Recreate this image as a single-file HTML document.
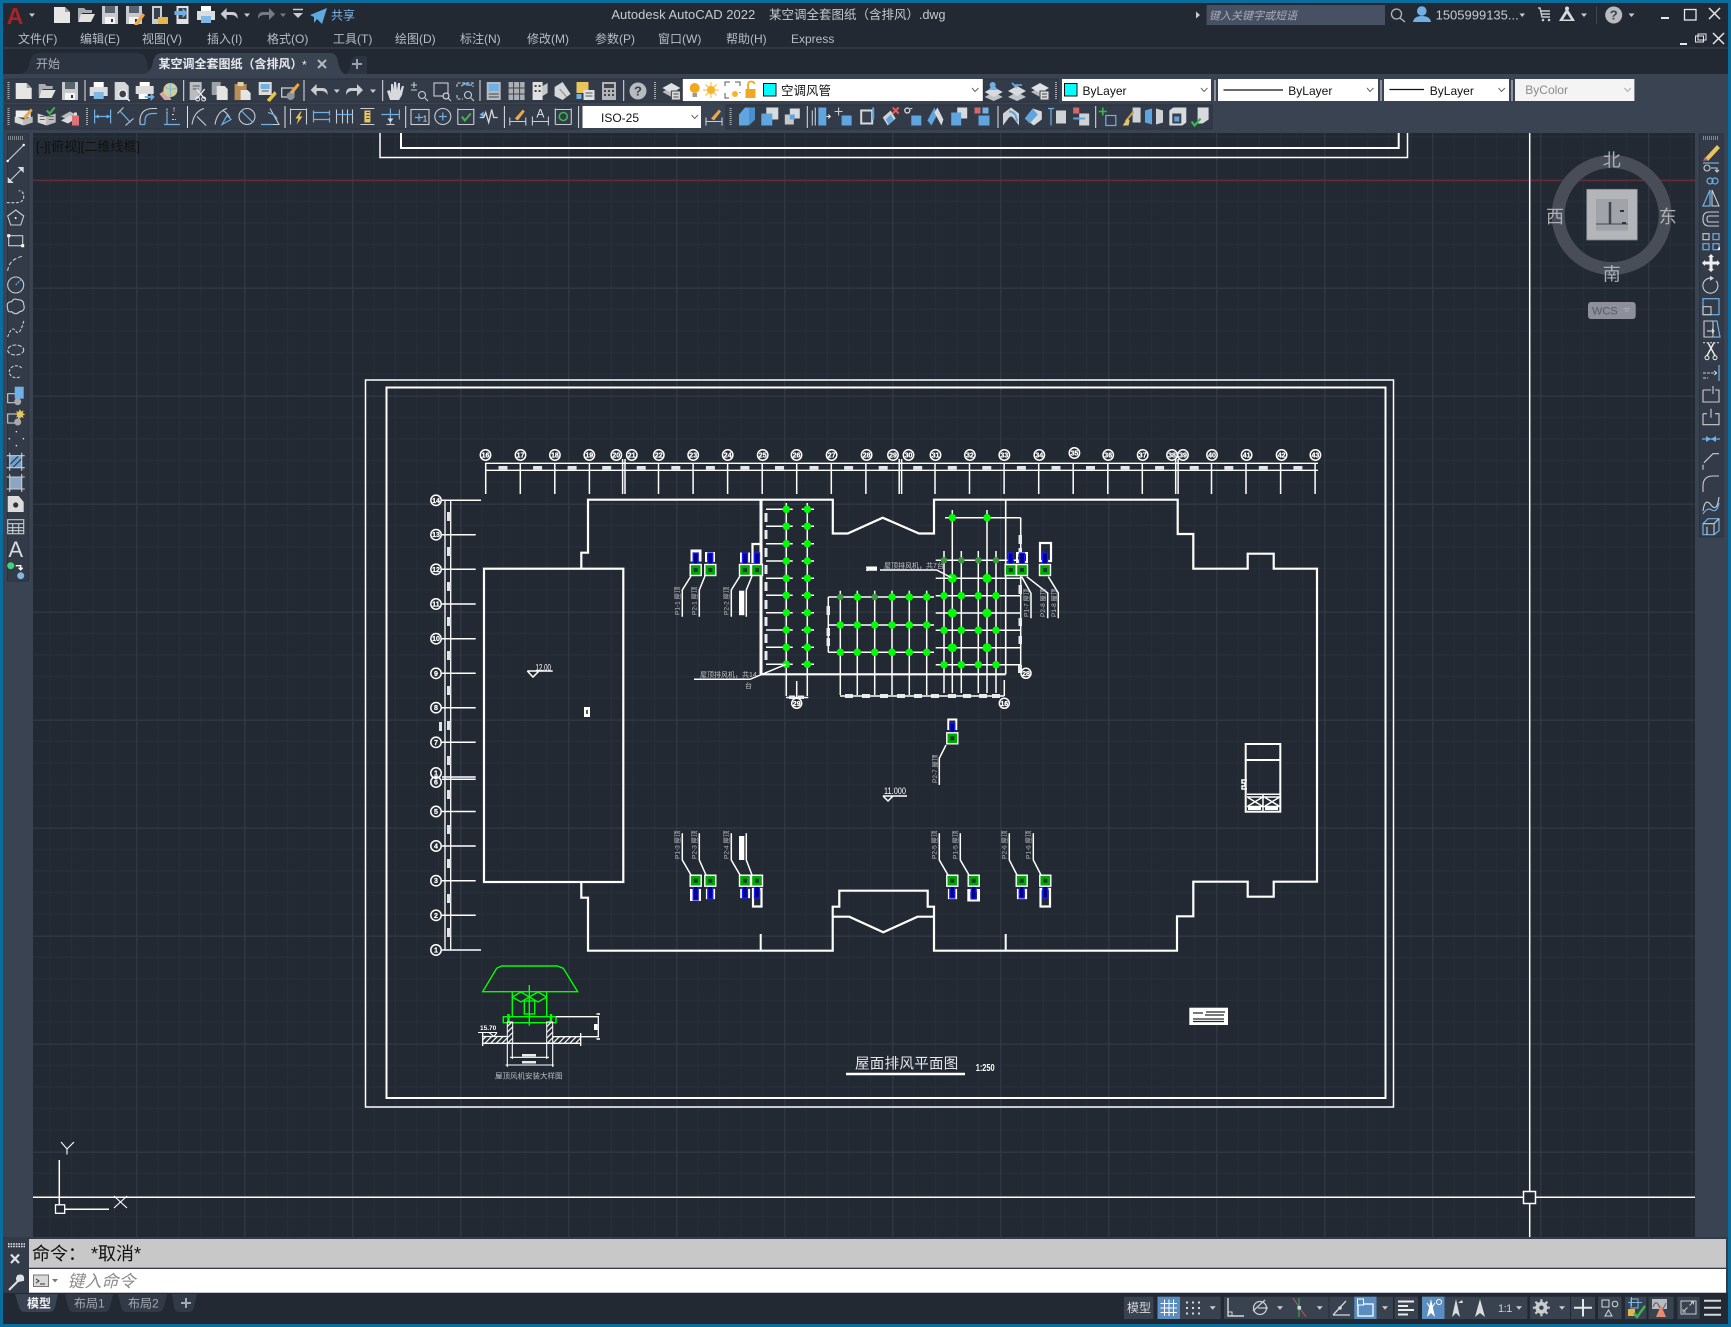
<!DOCTYPE html>
<html lang="zh"><head><meta charset="utf-8"><title>AutoCAD</title>
<style>
html,body{margin:0;padding:0;background:#222933;width:1731px;height:1327px;overflow:hidden}
svg{display:block;position:absolute;left:0;top:0}
text{font-family:"Liberation Sans","Noto Sans CJK SC",sans-serif}
.m{font-size:12px;fill:#b8bdc4}
.s{fill:none;stroke:#c8ced4;stroke-width:1.100}
.b{fill:none;stroke:#6fb1e6;stroke-width:1.200}
.w{fill:none;stroke:#fff;stroke-width:1.500}
.t{fill:none;stroke:#fff;stroke-width:2.200}
.n{font-size:7px;font-weight:bold;fill:#fff;text-anchor:middle;stroke:#fff;stroke-width:.25}
.c{fill:none;stroke:#fff;stroke-width:1.500}
.v{font-size:6.500px;fill:#b9bdc2}
.g{fill:none;stroke:#0f0;stroke-width:1.400}
.k{font-size:12px;fill:#111}
</style></head><body>
<svg width="1731" height="1327" viewBox="0 0 1731 1327" xmlns="http://www.w3.org/2000/svg">
<defs>
<pattern id="grid" x="28.3" y="71.6" width="108" height="108" patternUnits="userSpaceOnUse">
<rect width="108" height="108" fill="#222933"/>
<path d="M21.6 0V108M43.2 0V108M64.8 0V108M86.4 0V108M0 21.6H108M0 43.2H108M0 64.8H108M0 86.4H108" stroke="#282f3a" stroke-width="1" fill="none"/>
<path d="M.5 0V108M0 .5H108" stroke="#363d48" stroke-width="1" fill="none"/>
</pattern>
<pattern id="hat" width="4" height="4" patternUnits="userSpaceOnUse" patternTransform="rotate(45)"><rect width="1.2" height="4" fill="#fff"/></pattern>
<g id="new"><path d="M-8-8H3L8-3V8H-8Z" fill="#e6e6e4"/><path d="M3-8V-3H8Z" fill="#9aa0a6"/></g>
<g id="open"><path d="M-8-7h6l2 2h6v3H-4L-8 6Z" fill="#a9adb2"/><path d="M-5-1H9L5 7H-8Z" fill="#e2e2de"/></g>
<g id="save"><path d="M-8-9H8V9H-8Z" fill="#c6cacd"/><rect x="-5" y="-9" width="10" height="7" fill="#59626f"/><rect x="-5" y="2" width="10" height="7" fill="#f4f4f4"/><rect x="1" y="4" width="2" height="3" fill="#333"/></g>
<g id="saveas"><use href="#save"/><path d="M1 8L8-2L11 0L4 10L0 10Z" fill="#e9a94a"/></g>
<g id="print"><rect x="-5" y="-9" width="10" height="5" fill="#fff"/><rect x="-9" y="-4" width="18" height="9" fill="#dcdcdc"/><rect x="-5" y="1" width="10" height="7" fill="#7fb8e6"/></g>
<g id="undo"><path d="M-9-1L-3-7V-3H3Q8-3 8 3V4Q6 0 2 0H-3V5Z" fill="#c9ccd0"/></g>
<g id="redo"><path d="M9-1L3-7V-3H-3Q-8-3-8 3V4Q-6 0-2 0H3V5Z" fill="#c9ccd0"/></g>
<g id="dr"><path d="M-3-1.5H3L0 2Z" fill="#c9ccd0"/></g>
<g id="prev"><path d="M-7-9H3L7-5V9H-7Z" fill="#d5d6d6"/><circle cx="1" cy="3" r="4" fill="#39414e" stroke="#eee" stroke-width="1.3"/><path d="M4 6L8 10" stroke="#eee" stroke-width="1.5"/></g>
<g id="plot"><rect x="-5" y="-9" width="10" height="4" fill="#fff"/><rect x="-9" y="-5" width="18" height="8" fill="#dcdcdc"/><rect x="-6" y="3" width="9" height="5" fill="#fff"/><path d="M0 5H6V2L10 6L6 10V7H0Z" fill="#6fb1e6"/></g>
<g id="globe"><path d="M-9 3L-2-2L3 9L-4 9Z" fill="#d7a9a0"/><circle cx="2" cy="-1" r="7" fill="#cfcf9e"/><path d="M-3-4Q2 0 8-3M2-8V6" stroke="#7fb8e6" fill="none"/></g>
<g id="cut"><path d="M-7-9H5V-1L-1 9H-7Z" fill="#b9bdc1"/><path d="M-4-5H3M-4-2H2" stroke="#555"/><path d="M0-2L8 8M8-2L0 8" stroke="#eee" stroke-width="1.4"/><circle cx="1" cy="8" r="2" fill="none" stroke="#eee"/><circle cx="7" cy="8" r="2" fill="none" stroke="#eee"/></g>
<g id="copy"><path d="M-8-9H1V4H-8Z" fill="#9da2a7"/><path d="M-3-5H5L8-2V9H-3Z" fill="#e4e4e2"/></g>
<g id="paste"><path d="M-8-7H4V9H-8Z" fill="#b98d54"/><rect x="-5" y="-9" width="6" height="4" fill="#e0d3b0"/><path d="M-2-1H5L8 2V9H-2Z" fill="#e4e4e2"/></g>
<g id="match"><rect x="-8" y="-9" width="13" height="13" fill="#ddd"/><rect x="-6" y="-7" width="9" height="5" fill="#6fb1e6"/><path d="M-5 0H2" stroke="#555"/><path d="M0 9L8 0L10 3L3 11Z" fill="#e9c34a"/></g>
<g id="pub"><rect x="-8" y="-3" width="12" height="9" fill="none" stroke="#c9ccd0" stroke-width="1.3"/><circle cx="1" cy="5" r="4" fill="#8b949c"/><path d="M0 1L8-8L10-6L3 3Z" fill="#e9a94a"/></g>
<g id="hand"><path d="M-6 9L-9 0L-6-1L-5 2L-5-7L-3-7L-2-1L-2-9L0-9L1-1L2-8L4-8L4 0L6-5L8-5L6 4L3 9Z" fill="#d7dadc"/></g>
<g id="zrt"><path d="M-8-6H-2M-5-9V-3M-8-1H-2" class="s"/><circle cx="3" cy="4" r="3.5" class="s"/><path d="M6 7L9 10" class="s"/></g>
<g id="zw"><rect x="-8" y="-8" width="14" height="13" class="s"/><circle cx="4" cy="5" r="3" fill="#39414e" stroke="#eee"/><path d="M6 7L9 10" class="s"/></g>
<g id="zp"><path d="M-8-4V-8H8V-4M-8 4V8H-2" stroke="#d3d9de" fill="none" stroke-dasharray="3 1.5"/><path d="M-4-5L2-8V-6H7" stroke="#6fb1e6" fill="none" stroke-width="1.5"/><circle cx="3" cy="4" r="3.5" class="s"/><path d="M6 7L9 10" class="s"/></g>
<g id="pr"><rect x="-7" y="-9" width="14" height="18" fill="#b6bbc0"/><rect x="-5" y="-7" width="10" height="7" fill="#6fb1e6"/><path d="M-5 3H5M-5 6H5" stroke="#444"/></g>
<g id="dc"><rect x="-8" y="-9" width="16" height="18" fill="#aab0b5"/><path d="M-3-9V9M3-9V9M-8-3H8M-8 3H8" stroke="#444"/></g>
<g id="pal"><rect x="-7" y="-9" width="10" height="18" fill="#e0e0e0"/><path d="M-5-6h2v2h-2zM-1-6h2v2h-2zM-5-1h2v2h-2zM-1-1h2v2h-2z" fill="#444"/><path d="M3-5L8-8V2L3 5Z" fill="#c5c8cb"/></g>
<g id="sheet"><path d="M-8-4L0-9L8 3L0 9L-8 5Z" fill="#d5d8da"/><path d="M-3-2L4 6" stroke="#888"/></g>
<g id="note"><rect x="-9" y="-9" width="12" height="11" fill="#eac65a"/><rect x="-2" y="-1" width="11" height="10" fill="#dfe2e4"/><path d="M0 2H7M0 5H7" stroke="#555"/><rect x="-9" y="3" width="5" height="5" fill="#6fb1e6"/></g>
<g id="calc"><rect x="-7" y="-9" width="14" height="18" fill="#b2b6ba"/><rect x="-5" y="-7" width="10" height="4" fill="#444"/><path d="M-5-1h2v2h-2zM-1-1h2v2h-2zM3-1h2v2h-2zM-5 3h2v2h-2zM-1 3h2v2h-2zM3 3h2v2h-2z" fill="#444"/></g>
<g id="help"><circle r="8.5" fill="#b7bbc0"/><text x="0" y="4.5" text-anchor="middle" style="font-size:13px;font-weight:bold;fill:#39414e">?</text></g>
<g id="lay"><path d="M-9 1L0-4L9 1L0 6Z" fill="#b6bbc0"/><path d="M-9-3L0-8L9-3L0 2Z" fill="#dfe2e4"/><rect x="0" y="0" width="9" height="9" fill="#d9dcde" stroke="#444"/><path d="M2 3h5M2 6h5" stroke="#444"/></g>
<g id="lay2"><path d="M-9 6L0 1L9 6L0 10Z" fill="#c0c4c8"/><path d="M-9 1L0-4L9 1L0 6Z" fill="#d8dbdd"/><circle cx="-1" cy="-6" r="3" fill="#6fb1e6"/><path d="M-5-1H4L2-4H-3Z" fill="#6fb1e6"/></g>
<g id="lay3"><path d="M-9 6L0 1L9 6L0 10Z" fill="#c0c4c8"/><path d="M-9 0L0-5L9 0L0 5Z" fill="#d8dbdd"/><path d="M-5-8L-1-4V-6H5" fill="none" stroke="#6fb1e6" stroke-width="1.6"/></g>
<g id="book"><path d="M-9 0L0 3V9L-9 6Z" fill="#d8d8d8"/><path d="M9 0L0 3V9L9 6Z" fill="#bcbcbc"/><rect x="-8" y="-6" width="15" height="7" fill="#eee"/><path d="M-1 1L7-8L9-6L2 3Z" fill="#e9a94a"/></g>
<g id="book2"><path d="M-9-3L0 0V9L-9 6Z" fill="#d8d8d8"/><path d="M9-3L0 0V9L9 6Z" fill="#bcbcbc"/><path d="M-7 0h5M-7 3h5M2 0h5M2 3h5" stroke="#666"/><path d="M0-6L3-3L8-9" stroke="#3eb54e" fill="none" stroke-width="2"/></g>
<g id="tex"><path d="M-9 0L0-5L6-2L-2 3Z" fill="#b6bbc0"/><path d="M-9 4L0-1L6 2L-2 7Z" fill="#d5d8da"/><rect x="2" y="-1" width="7" height="10" fill="#e07078"/><rect x="4" y="-4" width="3" height="3" fill="#ddd"/></g>
<g id="d1"><path class="b" d="M-8-7V7M8-7V7M-8 0H8"/><path d="M-8 0l4-2v4zM8 0l-4-2v4z" fill="#6fb1e6"/></g>
<g id="d2"><path class="s" d="M-8-3L-2-9M0 9L8 2"/><path class="b" d="M-6-6L5 6"/></g>
<g id="d3"><path class="s" d="M-9 8V3Q-8-8 4-8H8"/><path class="b" d="M-4 8V4Q-4-3 4-3H8M-9 8H-4"/></g>
<g id="d4"><path class="b" d="M-8 8H8M-5 8V-3"/><path class="s" d="M-5-3V-8M0 3H4M0-2H3M2-9V-5" stroke-dasharray="2 1"/></g>
<g id="a1"><path class="s" d="M-9 8Q-7-5 3-8M-4 0L5 9"/></g>
<g id="a2"><path class="s" d="M-9 8Q-7-5 3-8M-1-6Q4-3 6 2"/><path class="b" d="M-2 8L3-1L7 3Z"/></g>
<g id="a3"><circle r="8" class="s"/><path class="b" d="M-6-6L6 6"/></g>
<g id="a4"><path class="s" d="M-9 8H9L0-8"/><path class="b" d="M-2-4Q6-2 7 3M-9 8L3 8"/></g>
<g id="f1"><path class="s" d="M-8-8V8M8-8V8M-8-7H8"/><path d="M2-5L-3 2H0L-2 8L4 0H1L3-5Z" fill="#eac65a"/></g>
<g id="f2"><path class="b" d="M-8-6V6M-8-4H8M-8 3H8M8-6V-1M8 1V6"/></g>
<g id="f3"><path class="s" d="M-8-7V7M-2-7V7M3-7V7M8-7V7"/><path class="b" d="M-8-2H8"/></g>
<g id="f4"><path class="s" d="M-7-8H7M-7 8H7"/><rect x="-3" y="-6" width="6" height="12" fill="#eac65a"/><path d="M-1-4H2M-1-1H2M-1 2H2" stroke="#444"/></g>
<g id="f5"><path class="b" d="M-9-2H9M9-7V3M0-8V8"/><path class="s" d="M-4 8H4"/><path d="M0 6l-3-4h6z" fill="#d3d9de"/></g>
<g id="g1"><rect x="-9" y="-7" width="18" height="15" class="s"/><path d="M-1-3V5M-5 1H3" class="b"/><text x="5" y="5" style="font-size:8px;fill:#eee;text-anchor:middle">1</text></g>
<g id="g2"><circle r="8" class="s"/><path class="b" d="M-4 0H4M0-4V4"/></g>
<g id="g3"><path class="s" d="M-8-8V8M8-8V8M-8-7H8"/><path d="M-4 0L-1 4L5-3" stroke="#3eb54e" stroke-width="2" fill="none"/><path class="s" d="M-8 8H8"/></g>
<g id="g4"><path d="M-9 1L-5 1L-3-4L0 6L3-7L5 1H9" fill="none" stroke="#d3d9de" stroke-width="1.3"/><path d="M-9-2L-5-5V1Z" fill="#6fb1e6"/></g>
<g id="g5"><path class="s" d="M-8 1V9M8 1V9M-8 5H8"/><path d="M-3 2L5-7L7-5L0 4Z" fill="#e9a94a"/></g>
<g id="g6"><path class="s" d="M-8 0V9M8 0V9M-8 5H8"/><text y="1" text-anchor="middle" style="font-size:12px;fill:#dfe3e6">A</text></g>
<g id="g7"><path class="s" d="M-8-8V8M8-8V8M-8-7H8M-8 8H8"/><circle r="4" fill="none" stroke="#3eb54e" stroke-width="1.6"/></g>
<g id="c1"><path d="M-8 9V-2L-2-9H8V3L1 9Z" fill="#5fa5e0"/><path d="M2-9H8V3L2 9Z" fill="#4a90cc"/></g>
<g id="c2"><path d="M-3-9H9V3H-3Z" fill="#d8dbdd"/><path d="M-8-3H3V9H-8Z" fill="#5fa5e0"/></g>
<g id="c3"><path d="M-2-8H8V2H-2Z" fill="#d8dbdd"/><path d="M-7-2H2V8H-7Z" fill="#c5c9cc"/><rect x="-2" y="-2" width="5" height="5" fill="#5fa5e0"/></g>
<g id="c4"><path d="M-2-9H6V9H-2Z" fill="#5fa5e0"/><path class="s" d="M-8-6V9M-5-9V9"/><path d="M6 0H10M8-2L10 0L8 2" stroke="#eee" fill="none"/></g>
<g id="c5"><path class="s" d="M-5-9V-1M-9-5H-1"/><rect x="-2" y="-1" width="10" height="10" fill="#5fa5e0"/></g>
<g id="c6"><rect x="-7" y="-7" width="13" height="15" fill="#d8dbdd"/><rect x="-5" y="-5" width="9" height="11" fill="#39414e"/><path d="M6-9V3" stroke="#5fa5e0" stroke-width="2"/></g>
<g id="c7"><path d="M-7 1L1-6L6 2L-2 9Z" fill="#d0d3d6"/><path d="M-4 3L1-2L4 3L-1 8Z" fill="#5fa5e0"/><path d="M3-9L9-3M9-9L3-3" stroke="#e25c5c" stroke-width="2"/></g>
<g id="c8"><circle cx="-6" cy="-6" r="2.5" fill="none" stroke="#ddd" stroke-width="1.3"/><path d="M-3-8h2" stroke="#ddd"/><rect x="-2" y="-1" width="10" height="10" fill="#5fa5e0"/></g>
<g id="c9"><path d="M-8 4L-1-9L2-2L-4 9Z" fill="#5fa5e0"/><path d="M2-9L8 3L6 9L-1-4Z" fill="#d8dbdd"/></g>
<g id="c10"><path d="M-1-9H9V2H-1Z" fill="#d8dbdd"/><path d="M-7-4H3V9H-7Z" fill="#5fa5e0"/></g>
<g id="c11"><rect x="-7" y="-9" width="6" height="6" fill="#d06a6a"/><rect x="1" y="-9" width="6" height="6" fill="#6fb1e6"/><rect x="-3" y="-1" width="11" height="10" fill="#5fa5e0"/></g>
<g id="c12"><path d="M-8 9V-3L0-9L8-3V9L2 1Q0-1-2 1Z" fill="#d0d3d6"/><path d="M-2-5Q5-5 6 5" stroke="#5fa5e0" stroke-width="2" fill="none"/></g>
<g id="c13"><path d="M-9 2L-1-8L8-5V3L0 9Z" fill="#d8dbdd"/><path d="M-9 2L-1-8L4-2L-4 7Z" fill="#5fa5e0"/></g>
<g id="c14"><path d="M-1-6H9V7H-1Z" fill="#d0d3d6"/><path class="b" d="M-6-8V9M-9-8H-3"/></g>
<g id="c15"><rect x="-7" y="-9" width="6" height="6" fill="#d06a6a"/><path d="M-1-3H9V9H-1Z" fill="#d0d3d6"/><path d="M-7 2H5" stroke="#5fa5e0" stroke-width="2"/></g>
<g id="c16"><path d="M-6-9V-1M-10-5H-2" stroke="#3eb54e" stroke-width="1.6"/><rect x="-3" y="-1" width="10" height="10" class="b" stroke-width="2"/></g>
<g id="c17"><path d="M1-9H9V6H1Z" fill="#cfd3d6"/><path d="M2-5L-6 5" stroke="#c6a45a" stroke-width="2"/><path d="M-9 9L-4 2L-2 4L-3 9Z" fill="#e5c76a"/></g>
<g id="c18"><path d="M-9-6L-2-8V8L-9 6Z" fill="#5fa5e0"/><path d="M2-8L9-6V6L2 8Z" fill="#d0d3d6"/></g>
<g id="c19"><path d="M-8-6L-4-9H9V6L5 9H-8Z" fill="#d8dbdd"/><rect x="-5" y="-3" width="9" height="10" fill="#39414e"/><rect x="-3" y="0" width="5" height="5" fill="#5fa5e0"/></g>
<g id="c20"><path d="M-3-9H8V3L2 7H-3Z" fill="#d8dbdd"/><path d="M-9 5L-6 9L0 2" stroke="#3eb54e" stroke-width="2.2" fill="none"/></g>
<g id="t1"><path class="s" d="M-8 8L8-8"/><circle cx="-8" cy="8" r="1.2" fill="#fff"/><circle cx="8" cy="-8" r="1.2" fill="#fff"/></g>
<g id="t2"><path class="s" d="M-5 5L5-5"/><path d="M-8 8V2L-2 8ZM8-8V-2L2-8Z" fill="#d5dade"/></g>
<g id="t3"><path class="s" d="M-9 6H0Q8 6 8 0Q8-6 3-6" stroke-dasharray="3 1.6"/></g>
<g id="t4"><path class="s" d="M0-8L8-2L5 7H-5L-8-2Z"/><circle cy="0" r="1" fill="#fff"/></g>
<g id="t5"><rect x="-7" y="-5" width="14" height="10" class="s"/><path d="M-8.500-6.500h3v3h-3zM5.500 3.500h3v3h-3z" fill="#fff"/></g>
<g id="t6"><path class="s" d="M-8 8Q-7-4 8-7" stroke-dasharray="4 2"/></g>
<g id="t7"><circle r="8" class="s"/><path class="b" d="M0 0L6-6" stroke-dasharray="2 1"/></g>
<g id="t8"><path class="s" d="M-8 2Q-10-5-4-5Q-2-9 2-7Q8-7 8-2Q10 4 4 5Q0 9-4 5Q-8 6-8 2Z"/></g>
<g id="t9"><path class="s" d="M-8 8Q-4-4 0 2T8-8" stroke-dasharray="3 1.5"/></g>
<g id="t10"><ellipse rx="8" ry="5" class="s" stroke-dasharray="4 1.5"/></g>
<g id="t11"><path class="s" d="M4 5A7 6 0 1 1 6-4" stroke-dasharray="3 1.5"/></g>
<g id="t12"><rect x="-8" y="-2" width="11" height="9" class="s"/><path d="M-1-9H8V3H-1Z" fill="#6fb1e6"/><circle cx="2" cy="6" r="3.5" fill="#aaa"/></g>
<g id="t13"><rect x="-8" y="-3" width="11" height="9" class="s"/><circle cx="2" cy="5" r="3.5" fill="#aaa"/><path d="M4-8l1.5 2.500 2.500-1-1 2.500 2.500 1.500-2.500 1 1 2.500-2.500-1L4 2l-1-2.500-2.500 1 1-2.500L-1-3l2.500-.5-1-2.500 2.500 1Z" fill="#eac65a"/></g>
<g id="t14"><path d="M0-7h1.400v1.400H0zM-7 0h1.400v1.400h-1.400zM7 0h1.400v1.400H7zM0 7h1.400v1.400H0z" fill="#e4e6e8"/></g>
<g id="t15"><rect x="-6" y="-6" width="12" height="12" fill="#6fa0cc"/><path d="M-3 6L6-3M-6 3L3-6" stroke="#223" stroke-width="1"/><path class="s" d="M-9-6H9M-9 6H9M-6-9V9M6-9V9"/></g>
<g id="t16"><rect x="-6" y="-6" width="12" height="12" fill="#8aa6c0"/><path class="s" d="M-9-6H9M-9 6H9M-6-9V9M6-9V9"/></g>
<g id="t17"><path d="M-8-8H3L8-2V8H-8Z" fill="#dcdcdc"/><circle cy="1" r="2.600" fill="#333"/></g>
<g id="t18"><rect x="-8" y="-7" width="16" height="14" class="s"/><path class="s" d="M-8-3H8M-8 1H8M-8 4H8M-3-3V7M3-3V7"/></g>
<g id="t19"><text y="8" text-anchor="middle" style="font-size:22px;fill:#d7dade">A</text></g>
<g id="t20"><circle cx="-5" cy="-5" r="3.500" fill="#3fd47a"/><circle cx="5" cy="5" r="3.500" fill="#7fb8e6"/><path d="M0-5H5V-1M3-3l2 2 2-2" stroke="#fff" stroke-width="1.400" fill="none"/></g>
<g id="r1"><path d="M-6 5L6-8L9-5L-3 8Z" fill="#e8c45a"/><path d="M-8 8L-6 4L-3 7Z" fill="#e25c7c"/><path class="b" d="M-8 10H8"/></g>
<g id="r2"><circle cx="-4" cy="-7" r="3" class="s"/><path class="s" d="M0-7H6V-3M4-5l2 2 2-2"/><circle cx="-1" cy="6" r="3" class="b"/><circle cx="4" cy="6" r="3" class="b"/></g>
<g id="r3"><path class="b" d="M-1-8L-8 8H-1Z"/><path d="M1-8L8 8H1Z" fill="none" stroke="#d3d9de"/></g>
<g id="r4"><path class="s" d="M8-7H-2Q-8-7-8 0Q-8 7-2 7H8M8-3H-2Q-4-3-4 0Q-4 3-2 3H8"/></g>
<g id="r5"><path class="s" d="M-8-8h6v6h-6z"/><path class="b" d="M2-8h6v6H2zM-8 2h6v6h-6zM2 2h6v6H2z"/><path d="M6 8l3-3v3z" fill="#fff"/></g>
<g id="r6"><path d="M0-9l3 3H1.500V-1.500H6V-3l3 3-3 3V1.500H1.500V6H3L0 9-3 6H-1.500V1.500H-6V3L-9 0-6-3v1.500H-1.500V-6H-3Z" fill="#eee"/></g>
<g id="r7"><path class="s" d="M5-5A7.500 7.500 0 1 1 0-7.500"/><path d="M-1-10L3-7.500L-1-5Z" fill="#d3d9de"/></g>
<g id="r8"><rect x="-8" y="-8" width="16" height="16" class="b"/><rect x="-8" y="0" width="8" height="8" class="s"/></g>
<g id="r9"><path class="s" d="M-7-8H2V8H-7Z"/><path class="b" d="M2-8H6L9 8H2"/><path d="M-4 2H3M1 0l2 2-2 2" stroke="#eee" fill="none"/></g>
<g id="r10"><path class="s" d="M-8-8H8" stroke-dasharray="2 1.500"/><path d="M-3-8L4 5M3-8L-4 5" stroke="#eee" stroke-width="1.500"/><circle cx="-4" cy="7" r="2" fill="none" stroke="#eee"/><circle cx="4" cy="7" r="2" fill="none" stroke="#eee"/></g>
<g id="r11"><path class="b" d="M8-8V8"/><path class="s" d="M-8 0H6M3-2l3 2-3 2M-8 5H-3" stroke-dasharray="3 1"/></g>
<g id="r12"><path class="s" d="M-8-5H0M4-5H8V7H-8V-5M2-9V-1"/></g>
<g id="r13"><path class="s" d="M-8-3V8H8V-3H4M-4-3H-8M0-8V1"/></g>
<g id="r14"><path class="b" d="M-9 0H9"/><path d="M-5-3L0 0L-5 3ZM5-3L0 0L5 3Z" fill="#6fb1e6"/></g>
<g id="r15"><path class="s" d="M-8 8V3M-7 1L2-8H8"/></g>
<g id="r16"><path class="s" d="M-8 9V3Q-8-7 2-7H8"/></g>
<g id="r17"><path class="s" d="M-8 6Q-6-8 0 0T8-8"/><path class="b" d="M-8 9Q-4 2 1 5T8-2"/></g>
<g id="r18"><path class="b" d="M-8-3L-3-8H8V4L3 8H-8Z"/><path class="s" d="M-8-3H3V8M3-3L8-8M-4 0V8"/></g>
<g id="u"><rect x="-5.500" y="-5.500" width="11" height="11" fill="#00a800" stroke="#fff" stroke-width="1.400"/><rect x="-2" y="-2" width="4" height="4" fill="#023c30"/></g>
</defs>

<!-- window frame -->
<rect width="1731" height="1327" fill="#0b6c9e"/>
<rect x="3" y="3" width="1725" height="1321" fill="#222933"/>
<path d="M3 48H1728" stroke="#3d4551"/>

<!-- title bar -->
<text x="15" y="24" style="font-size:23px;font-weight:bold;fill:#a92226" text-anchor="middle">A</text>
<use href="#dr" x="32" y="15"/>
<use href="#new" x="62" y="15"/><use href="#open" x="86" y="15"/><use href="#save" x="110" y="15"/><use href="#saveas" x="134" y="15"/>
<g transform="translate(159 15)"><rect x="-7" y="-9" width="10" height="18" fill="#c9ccd0"/><rect x="-5" y="-7" width="6" height="11" fill="#39414e"/><path d="M-1 2H9V9H-1Z" fill="#e9b64a"/></g>
<g transform="translate(182.500 15)"><rect x="-6" y="-9" width="12" height="18" fill="#e2e2e2"/><rect x="-4" y="-7" width="8" height="11" fill="#39414e"/><path d="M-8-4H0V-7L5-2L0 3V0H-8Z" fill="#6fb1e6"/></g>
<use href="#print" x="206" y="15"/><use href="#undo" x="229.600" y="15"/><use href="#dr" x="247" y="15"/>
<g opacity=".5"><use href="#redo" x="266" y="15"/><use href="#dr" x="283" y="15"/></g>
<path d="M293 9.500H303" stroke="#c9ccd0" stroke-width="1.500"/><path d="M293 13H303L298 18Z" fill="#c9ccd0"/>
<path d="M310 15L327 8L322 24L317 19L314 23V17Z" fill="#5ea9dd"/>
<text x="331" y="19.500" style="font-size:12px;fill:#7fb8e6">共享</text>
<text x="611.400" y="19" style="font-size:13px;fill:#c6cad0">Autodesk AutoCAD 2022</text>
<text x="769" y="19" style="font-size:12.500px;fill:#c6cad0">某空调全套图纸（含排风）.dwg</text>
<path d="M1196 11.500L1200 15L1196 18.500Z" fill="#c9ccd0"/>
<rect x="1206.600" y="5" width="178.400" height="20" fill="#485064"/>
<text x="1209" y="19.500" style="font-size:11px;font-style:italic;fill:#a7acb7">键入关键字或短语</text>
<circle cx="1396.500" cy="14" r="5" fill="none" stroke="#b5bac0" stroke-width="1.300"/><path d="M1400 18L1405 22" stroke="#b5bac0" stroke-width="1.300"/>
<circle cx="1421.800" cy="11" r="4.800" fill="#6fb1e6"/><path d="M1413 22Q1414 16 1421.800 16Q1430 16 1431 22Z" fill="#6fb1e6"/>
<text x="1435.600" y="19.500" style="font-size:13px;fill:#c6cad0">1505999135...</text>
<path d="M1519.500 13.500H1525L1522.200 17Z" fill="#c9ccd0"/>
<path d="M1538 8H1540L1542 17H1550M1541 11H1550M1541.500 14H1550" fill="none" stroke="#c9ccd0" stroke-width="1.400"/><circle cx="1543" cy="20" r="1.300" fill="#c9ccd0"/><circle cx="1549" cy="20" r="1.300" fill="#c9ccd0"/>
<path d="M1567 8L1575 21H1559ZM1567 13.500L1563 19.500H1571Z" fill="#d5d8dc" fill-rule="evenodd"/><circle cx="1567" cy="8.500" r="2" fill="#d5d8dc"/>
<path d="M1581 13.500H1587L1584 17Z" fill="#c9ccd0"/>
<path d="M1596.500 6V24" stroke="#3d4551"/>
<use href="#help" x="1613.700" y="15"/><path d="M1628.500 13.500H1634.500L1631.500 17Z" fill="#c9ccd0"/>
<rect x="1661" y="17" width="8" height="2" fill="#e6e8ea"/>
<rect x="1684.500" y="9.500" width="11.500" height="10.500" fill="none" stroke="#e6e8ea" stroke-width="1.300"/>
<path d="M1709 8L1720 19M1720 8L1709 19" stroke="#e6e8ea" stroke-width="1.500"/>

<!-- menu -->
<text class="m" x="18" y="43">文件(F)</text><text class="m" x="80" y="43">编辑(E)</text><text class="m" x="142" y="43">视图(V)</text><text class="m" x="207" y="43">插入(I)</text><text class="m" x="267" y="43">格式(O)</text><text class="m" x="333" y="43">工具(T)</text><text class="m" x="395" y="43">绘图(D)</text><text class="m" x="460" y="43">标注(N)</text><text class="m" x="527" y="43">修改(M)</text><text class="m" x="595" y="43">参数(P)</text><text class="m" x="658" y="43">窗口(W)</text><text class="m" x="726" y="43">帮助(H)</text><text class="m" x="791" y="43">Express</text>
<rect x="1680" y="43" width="7" height="2" fill="#e6e8ea"/>
<rect x="1695.500" y="36" width="8" height="6" fill="none" stroke="#e6e8ea"/><rect x="1698" y="34" width="8" height="6" fill="none" stroke="#e6e8ea"/>
<path d="M1713 33L1724 44M1724 33L1713 44" stroke="#e6e8ea" stroke-width="1.500"/>

<!-- tabs -->
<path d="M21 74Q28 72 30 62Q31 53 40 53H136Q145 53 147 62Q148 72 154 74Z" fill="#2d3441"/>
<text x="36" y="68" style="font-size:12px;fill:#aab0b8">开始</text>
<path d="M145 74Q151 72 153 62Q154 53 163 53H330Q337 53 338 62Q340 72 345 74Z" fill="#3a4352"/>
<text x="158.500" y="68" style="font-size:12px;font-weight:bold;fill:#e8eaec">某空调全套图纸（含排风）</text>
<text x="302" y="69" style="font-size:12px;fill:#e8eaec">*</text>
<path d="M318 60L326 68M326 60L318 68" stroke="#b5bac0" stroke-width="2"/>
<path d="M346 74Q350 72 351 62Q352 56 358 56H367V74Z" fill="#2d3441"/>
<path d="M352 64H362M357 59V69" stroke="#9aa0a8" stroke-width="2"/>

<!-- toolbar band -->
<rect x="3" y="74" width="1725" height="59" fill="#3a4352"/>
<rect x="5" y="79" width="678" height="23" fill="#333b49" stroke="#2b323e"/>
<rect x="5" y="105" width="574" height="24" fill="#333b49" stroke="#2b323e"/>
<rect x="726" y="105" width="486" height="24" fill="#333b49" stroke="#2b323e"/>
<rect x="983" y="79" width="75" height="23" fill="#333b49" stroke="#2b323e"/>
<path d="M8.500 82V99M8.500 108V126M87 108V126M655 82V99M730.600 108V126M1056 82V99" stroke="#aab0b6" stroke-width="2" stroke-dasharray="1 1"/>
<path d="M85 80V101M183.700 80V101M304 80V101M382.700 80V101M480 80V101M623.700 80V101M187.500 106V128M285 106V128M405.700 106V128M504.400 106V128M578.600 106V128M807.300 106V128M998 106V128M1095.700 106V128M1215 80V101M1381 80V101M1512 80V101" stroke="#dfe2e5" stroke-width="1"/>
<!-- row 1 icons -->
<g transform="translate(0 91)"><use href="#new" x="23.700"/><use href="#open" x="46.700"/><use href="#save" x="70"/><use href="#print" x="98.700"/><use href="#prev" x="121.700"/><use href="#plot" x="144.700"/><use href="#globe" x="168.400"/><use href="#cut" x="196.700"/><use href="#copy" x="219.700"/><use href="#paste" x="242.600"/><use href="#match" x="266.700"/><use href="#pub" x="289.700"/><use href="#undo" x="319.600"/><use href="#dr" x="336.800"/><use href="#redo" x="354"/><use href="#dr" x="373"/><use href="#hand" x="396"/><use href="#zrt" x="419"/><use href="#zw" x="442"/><use href="#zp" x="465"/><use href="#pr" x="493.700"/><use href="#dc" x="516.600"/><use href="#pal" x="539.600"/><use href="#sheet" x="562.600"/><use href="#note" x="585.500"/><use href="#calc" x="609"/><use href="#help" x="638"/><use href="#lay" x="671.400"/><use href="#lay2" x="993.700"/><use href="#lay3" x="1017"/><use href="#lay" x="1040"/></g>
<!-- layer combo -->
<rect x="682.800" y="79" width="300" height="22" fill="#fff"/>
<circle cx="694.700" cy="88" r="5" fill="#f0a81e"/><rect x="692.500" y="93" width="4.500" height="4" fill="#9a9a9a"/>
<circle cx="711" cy="90" r="4" fill="#f5b42a"/><path d="M711 82V98M703 90H719M705.500 84.500L716.500 95.500M716.500 84.500L705.500 95.500" stroke="#f5b42a"/>
<path d="M725 86V82H730M735 82H740V86M725 93V98H729M740 92V93" fill="none" stroke="#555"/><circle cx="735" cy="94" r="3" fill="#f5b42a"/>
<rect x="745.500" y="89" width="10" height="9" fill="#f0a81e"/><path d="M748 89V85Q748 81.500 751 81.500Q754 81.500 754.500 84" fill="none" stroke="#f0a81e" stroke-width="1.800"/>
<rect x="763.500" y="83.500" width="12.500" height="12.500" fill="#0ff" stroke="#111"/>
<text class="k" x="781" y="95" style="font-size:12.500px">空调风管</text>
<path d="M972 88L975 91.500L978.500 88" fill="none" stroke="#666"/>
<!-- ByLayer combos -->
<rect x="1062" y="79" width="149" height="22" fill="#fff"/>
<rect x="1064.500" y="83.500" width="12.500" height="12.500" fill="#0ff" stroke="#111"/>
<text class="k" x="1082.500" y="95">ByLayer</text>
<path d="M1201 88L1204 91.500L1207.500 88" fill="none" stroke="#666"/>
<rect x="1218" y="79" width="160" height="22" fill="#fff"/>
<path d="M1223.500 90H1283" stroke="#111" stroke-width="1.200"/>
<text class="k" x="1288.300" y="95">ByLayer</text>
<path d="M1367 88L1370 91.500L1373.500 88" fill="none" stroke="#666"/>
<rect x="1384" y="79" width="125" height="22" fill="#fff"/>
<path d="M1389.400 89.500H1424" stroke="#111" stroke-width="1.200"/>
<text class="k" x="1429.800" y="95">ByLayer</text>
<path d="M1498.500 88L1501.500 91.500L1505 88" fill="none" stroke="#666"/>
<rect x="1515" y="79" width="119.400" height="22" fill="#f4f4f4"/>
<text x="1525.300" y="94" style="font-size:12px;fill:#8a8a8a">ByColor</text>
<path d="M1624.500 88L1627.500 91.500L1631 88" fill="none" stroke="#aaa"/>
<!-- row 2 icons -->
<g transform="translate(0 116.500)"><use href="#book" x="23.700"/><use href="#book2" x="46.700"/><use href="#tex" x="70"/><use href="#d1" x="102.600"/><use href="#d2" x="125.500"/><use href="#d3" x="149"/><use href="#d4" x="172"/><use href="#a1" x="201"/><use href="#a2" x="224"/><use href="#a3" x="247"/><use href="#a4" x="270"/><use href="#f1" x="298.500"/><use href="#f2" x="321.500"/><use href="#f3" x="344.500"/><use href="#f4" x="367.400"/><use href="#f5" x="390.400"/><use href="#g1" x="420"/><use href="#g2" x="442.800"/><use href="#g3" x="465.800"/><use href="#g4" x="488.700"/><use href="#g5" x="517.800"/><use href="#g6" x="540.400"/><use href="#g7" x="563.300"/>
<use href="#g5" x="714"/><use href="#c1" x="747"/><use href="#c2" x="769.300"/><use href="#c3" x="791.800"/><use href="#c4" x="820.300"/><use href="#c5" x="843.600"/><use href="#c6" x="867.200"/><use href="#c7" x="889.700"/><use href="#c8" x="913.300"/><use href="#c9" x="935.400"/><use href="#c10" x="958.200"/><use href="#c11" x="981.500"/><use href="#c12" x="1011"/><use href="#c13" x="1033.800"/><use href="#c14" x="1057"/><use href="#c15" x="1080.200"/><use href="#c16" x="1108.800"/><use href="#c17" x="1131.600"/><use href="#c18" x="1154"/><use href="#c19" x="1177.300"/><use href="#c20" x="1200.600"/></g>
<rect x="582.500" y="106" width="118.500" height="22" fill="#fff"/>
<text class="k" x="601" y="122">ISO-25</text>
<path d="M691.500 115L694.700 118.500L698 115" fill="none" stroke="#666"/>

<!-- canvas -->
<rect x="33" y="133" width="1662" height="1104" fill="url(#grid)"/>
<path d="M33 180.700H1695" stroke="#6b2b30" stroke-width="1"/>
<text x="36" y="151" style="font-size:13px;fill:#111">[-][俯视][二维线框]</text>

<!-- upper sheet -->
<path d="M380 133V157.500H1407.500V133" class="w"/>
<path d="M401 133V148H1398.700V133" class="t" style="stroke-width:2"/>

<!-- frames -->
<rect x="365.500" y="380" width="1028" height="727" class="w"/>
<rect x="386.500" y="387.500" width="999" height="710.500" class="t" style="stroke-width:2"/>

<!-- axes -->
<path d="M1529.700 133V1237" class="w"/>
<path d="M33 1197.300H1695" class="w"/>
<rect x="1523.500" y="1191.500" width="12" height="12" fill="#222933" stroke="#fff" stroke-width="1.500"/>
<path d="M59.300 1160V1204.700M65 1209.300H109" class="w"/>
<rect x="55.500" y="1204.800" width="9.200" height="8.500" fill="none" stroke="#fff" stroke-width="1.300"/>
<path d="M61 1142L67 1149L74 1142M67 1149V1154.500M114 1196L127 1208M114 1208L127 1196" fill="none" stroke="#fff" stroke-width="1.100"/>

<!-- top dimension -->
<path d="M485 463.300H1318M485 470.300H1318" class="w" style="stroke-width:1.300"/>
<path d="M485.700 463V494M520.300 463V494M554.800 463V494M589.400 463V494M622.600 459V494M625 459V494M658.500 463V494M693.100 463V494M727.600 463V494M762.200 463V494M796.700 463V494M831.300 463V494M865.900 463V494M899.200 459V494M901.600 459V494M935 463V494M969.500 463V494M1004.100 463V494M1038.700 463V494M1073.200 463V494M1107.800 463V494M1142.300 463V494M1175.700 459V494M1178.100 459V494M1211.500 463V494M1246 463V494M1280.600 463V494M1315.100 463V494" class="w" style="stroke-width:1.500"/>
<path d="M498.500 466h9v3.500h-9zM533.100 466h9v3.500h-9zM567.600 466h9v3.500h-9zM602.200 466h9v3.500h-9zM636.700 466h9v3.500h-9zM671.300 466h9v3.500h-9zM705.900 466h9v3.500h-9zM740.400 466h9v3.500h-9zM775 466h9v3.500h-9zM809.500 466h9v3.500h-9zM844.100 466h9v3.500h-9zM878.700 466h9v3.500h-9zM913.200 466h9v3.500h-9zM947.800 466h9v3.500h-9zM982.300 466h9v3.500h-9zM1016.900 466h9v3.500h-9zM1051.500 466h9v3.500h-9zM1086 466h9v3.500h-9zM1120.600 466h9v3.500h-9zM1155.100 466h9v3.500h-9zM1189.700 466h9v3.500h-9zM1224.300 466h9v3.500h-9zM1258.800 466h9v3.500h-9zM1293.400 466h9v3.500h-9z" fill="#e2e4e6"/>
<g class="c">
<circle cx="485.500" cy="455" r="5.200"/><circle cx="520.500" cy="455" r="5.200"/><circle cx="554.900" cy="455" r="5.200"/><circle cx="589.300" cy="455" r="5.200"/><circle cx="616.300" cy="455" r="5.200"/><circle cx="631.800" cy="455" r="5.200"/><circle cx="658.800" cy="455" r="5.200"/><circle cx="693.200" cy="455" r="5.200"/><circle cx="727.700" cy="455" r="5.200"/><circle cx="762.700" cy="455" r="5.200"/><circle cx="796.500" cy="455" r="5.200"/><circle cx="831.600" cy="455" r="5.200"/><circle cx="866.600" cy="455" r="5.200"/><circle cx="893" cy="455" r="5.200"/><circle cx="908.500" cy="455" r="5.200"/><circle cx="935.500" cy="455" r="5.200"/><circle cx="969.900" cy="455" r="5.200"/><circle cx="1004.300" cy="455" r="5.200"/><circle cx="1039.300" cy="455" r="5.200"/><circle cx="1074.400" cy="453" r="5.200"/><circle cx="1108.200" cy="455" r="5.200"/><circle cx="1142.700" cy="455" r="5.200"/><circle cx="1172" cy="455" r="5.200"/><circle cx="1183" cy="455" r="5.200"/><circle cx="1212" cy="455" r="5.200"/><circle cx="1246.600" cy="455" r="5.200"/><circle cx="1281.600" cy="455" r="5.200"/><circle cx="1315.400" cy="455" r="5.200"/>
</g>
<text class="n" x="485.500" y="457.500">16</text><text class="n" x="520.500" y="457.500">17</text><text class="n" x="554.900" y="457.500">18</text><text class="n" x="589.300" y="457.500">19</text><text class="n" x="616.300" y="457.500">20</text><text class="n" x="631.800" y="457.500">21</text><text class="n" x="658.800" y="457.500">22</text><text class="n" x="693.200" y="457.500">23</text><text class="n" x="727.700" y="457.500">24</text><text class="n" x="762.700" y="457.500">25</text><text class="n" x="796.500" y="457.500">26</text><text class="n" x="831.600" y="457.500">27</text><text class="n" x="866.600" y="457.500">28</text><text class="n" x="893" y="457.500">29</text><text class="n" x="908.500" y="457.500">30</text><text class="n" x="935.500" y="457.500">31</text><text class="n" x="969.900" y="457.500">32</text><text class="n" x="1004.300" y="457.500">33</text><text class="n" x="1039.300" y="457.500">34</text><text class="n" x="1074.400" y="455.500">35</text><text class="n" x="1108.200" y="457.500">36</text><text class="n" x="1142.700" y="457.500">37</text><text class="n" x="1172" y="457.500">38</text><text class="n" x="1183" y="457.500">39</text><text class="n" x="1212" y="457.500">40</text><text class="n" x="1246.600" y="457.500">41</text><text class="n" x="1281.600" y="457.500">42</text><text class="n" x="1315.400" y="457.500">43</text>

<!-- left dimension -->
<path d="M445 500V950M450.700 500V950" class="w" style="stroke-width:1.300"/>
<path d="M442 500.300H481M442 534.700H475.700M442 569.300H475.700M442 604H475.700M442 638.700H475.700M442 673.300H475.700M442 707.700H475.700M442 742.300H475.700M442 777H475.700M442 779.300H475.700M442 811.500H475.700M442 846H475.700M442 880.700H475.700M442 915.300H475.700M442 950H481" class="w" style="stroke-width:1.500"/>
<path d="M447 512h4v9h-4zM447 547h4v9h-4zM447 582h4v9h-4zM447 617h4v9h-4zM447 651h4v9h-4zM447 686h4v9h-4zM447 721h4v9h-4zM439 722h3v9h-3zM447 756h4v9h-4zM447 790h4v9h-4zM447 825h4v9h-4zM447 859h4v9h-4zM447 894h4v9h-4zM447 928h4v9h-4z" fill="#e2e4e6"/>
<g class="c">
<circle cx="436" cy="500.300" r="5.200"/><circle cx="436" cy="534.700" r="5.200"/><circle cx="436" cy="569.300" r="5.200"/><circle cx="436" cy="604" r="5.200"/><circle cx="436" cy="638.700" r="5.200"/><circle cx="436" cy="673.300" r="5.200"/><circle cx="436" cy="707.700" r="5.200"/><circle cx="436" cy="742.300" r="5.200"/><circle cx="436" cy="773" r="5.200"/><circle cx="436" cy="782" r="5.200"/><circle cx="436" cy="811.500" r="5.200"/><circle cx="436" cy="846" r="5.200"/><circle cx="436" cy="880.700" r="5.200"/><circle cx="436" cy="915.300" r="5.200"/><circle cx="436" cy="950" r="5.200"/>
</g>
<text class="n" x="436" y="502.800">14</text><text class="n" x="436" y="537.200">13</text><text class="n" x="436" y="571.800">12</text><text class="n" x="436" y="606.500">11</text><text class="n" x="436" y="641.200">10</text><text class="n" x="436" y="675.800">9</text><text class="n" x="436" y="710.200">8</text><text class="n" x="436" y="744.800">7</text><text class="n" x="436" y="775.500">1</text><text class="n" x="436" y="784.500">6</text><text class="n" x="436" y="814">5</text><text class="n" x="436" y="848.500">4</text><text class="n" x="436" y="883.200">3</text><text class="n" x="436" y="917.800">2</text><text class="n" x="436" y="952.500">1</text>

<!-- building -->
<path class="t" d="M581.300 568.700V552.700H588V499.700H832.800V533.500H847.700L882.700 517.700L919 533.500H934V499.700H1177.700V534H1193.300V568.700H1247.700V553.700H1273.700V568.700H1317V881.700H1273.700V896.700H1247.700V881.700H1193.300V916.300H1177V950.700H934V906.700H927.700V890.700H839.300V906.700H832.700V950.700H588V897.700H581.300V882"/>
<rect x="484" y="568.700" width="139.300" height="313.300" class="t"/>
<path class="t" d="M832.700 916.700H849.300L883.300 932.300L917.500 916.700H934"/>
<path class="w" d="M760.700 934V950.700M1005.700 934V950.700" style="stroke-width:2"/>
<path class="t" style="stroke-width:3" d="M761 499V674.300"/>
<path class="t" d="M761 674.300H1005.700"/>
<path class="w" d="M1005.700 499V674.300" style="stroke-width:1.600"/>

<!-- grid A -->
<path class="w" d="M786.300 503V696M807.300 503V696M766 509.300H792.700M801.700 509.300H814M766 526.300H792.700M801.700 526.300H814M766 543.700H792.700M801.700 543.700H814M766 561H792.700M801.700 561H814M766 578.300H792.700M801.700 578.300H814M766 595.300H792.700M801.700 595.300H814M766 612.700H792.700M801.700 612.700H814M766 630H792.700M801.700 630H814M766 647.300H792.700M801.700 647.300H814M766 664.300H792.700M801.700 664.300H814M786 697.500H808.300M796.700 681V697"/>
<path d="M764.500 513h3v9h-3zM764.500 530h3v9h-3zM764.500 548h3v9h-3zM764.500 565h3v9h-3zM764.500 582h3v9h-3zM764.500 600h3v9h-3zM764.500 617h3v9h-3zM764.500 634h3v9h-3zM764.500 651h3v9h-3zM789 695.500h6v3.500h-6zM798 695.500h6v3.500h-6z" fill="#e8eaec"/>
<circle cx="796.700" cy="703.300" r="5" class="c"/><text class="n" x="796.700" y="705.800">29</text>

<!-- grid B -->
<path class="w" d="M828.300 597H934M828.300 625H934M828.300 652.300H934M840.300 590.700V695M857.300 590.700V695M874.700 590.700V695M892 590.700V695M909.300 590.700V695M926.700 590.700V695M828.300 597V652.300M840 696H1004.300"/>
<path d="M826.500 606h3.500v9h-3.500zM826.500 628h3.500v8h-3.500zM826.500 638h3.500v8h-3.500zM845 694h8v4h-8zM862 694h8v4h-8zM880 694h8v4h-8zM897 694h8v4h-8zM914 694h8v4h-8zM931 694h8v4h-8zM948 694h8v4h-8zM963 694h8v4h-8zM979 694h8v4h-8zM992 694h8v4h-8z" fill="#e8eaec"/>

<!-- grid C -->
<path class="w" d="M945 517.700H1020.700M935.700 560.300H1020.700M935.700 578.300H1020.700M935.700 595.700H1020.700M935.700 613H1020.700M935.700 630.300H1020.700M935.700 647.700H1020.700M935.700 664.700H1020.700M944 551V693M961.300 551V693M978.300 551V693M996 551V693M952.300 510V693M987 510V693M1020.700 517.700V668M1004.300 680V696"/>
<path d="M1018.500 535h3.500v9h-3.500zM1018.500 548h3.500v9h-3.500zM1018.500 585h3.500v9h-3.500zM1018.500 618h3.500v8h-3.500zM1018.500 636h3.500v8h-3.500zM1018 665h4v8h-4z" fill="#e8eaec"/>
<circle cx="1026" cy="673.300" r="5" class="c"/><text class="n" x="1026" y="675.800">28</text>
<circle cx="1004.300" cy="703.300" r="5" class="c"/><text class="n" x="1004.300" y="705.800">16</text>

<!-- green dots -->
<path fill="none" stroke="#0f0" stroke-width="7.500" stroke-linecap="round" d="M786.300 509.300h.01M807.300 509.300h.01M786.300 526.300h.01M807.300 526.300h.01M786.300 543.700h.01M807.300 543.700h.01M786.300 561h.01M807.300 561h.01M786.300 578.300h.01M807.300 578.300h.01M786.300 595.300h.01M807.300 595.300h.01M786.300 612.700h.01M807.300 612.700h.01M786.300 630h.01M807.300 630h.01M786.300 647.300h.01M807.300 647.300h.01M786.300 664.300h.01M807.300 664.300h.01M857.300 597h.01M892 597h.01M909.300 597h.01M926.700 597h.01M840.300 625h.01M857.300 625h.01M874.700 625h.01M892 625h.01M909.300 625h.01M926.700 625h.01M840.300 652.300h.01M857.300 652.300h.01M874.700 652.300h.01M892 652.300h.01M909.300 652.300h.01M926.700 652.300h.01M952.300 517.700h.01M987 517.700h.01M944 595.700h.01M961.300 595.700h.01M978.300 595.700h.01M996 595.700h.01M944 630.300h.01M961.300 630.300h.01M978.300 630.300h.01M996 630.300h.01M944 664.700h.01M961.300 664.700h.01M978.300 664.700h.01M996 664.700h.01"/>
<path fill="none" stroke="#0f0" stroke-width="9" stroke-linecap="round" d="M952.300 578.300h.01M987 578.300h.01M952.300 613h.01M987 613h.01M952.300 647.700h.01M987 647.700h.01"/>
<path fill="none" stroke="#3d9a3d" stroke-width="6.500" stroke-linecap="round" d="M840.300 597h.01M874.700 597h.01M944 560.300h.01M961.300 560.300h.01M978.300 560.300h.01M996 560.300h.01"/>

<!-- leaders -->
<path class="w" d="M694 679.300H750L786 664.300M880 570H936.700L952 578"/>
<text x="700" y="677" style="font-size:7px;fill:#c0c4c8">屋顶排风机，共14</text><text x="745" y="688" style="font-size:7px;fill:#c0c4c8">台</text>
<text x="884" y="568" style="font-size:7px;fill:#c0c4c8">屋顶排风机，共7台</text>
<path d="M866 566.500h11v3h-8l-2 2z" fill="#fff"/><path class="w" d="M866 570H877"/>

<!-- fan units top -->
<path class="t" style="stroke-width:3" d="M692 551h8v9h-8z"/>
<path class="t" style="stroke-width:2" d="M706 553h8v8h-8zM741 553.500h8v8h-8zM1017 553h10v9h-10zM948.300 719.500h8v9.500h-8z"/>
<path class="t" d="M752.500 563V544H761M1040 543h11v18h-11z"/>
<path fill="#00008b" stroke="#1a1aff" stroke-width="1.300" d="M693.200 553h5v21h-5zM707.800 553h5v21h-5zM742.500 553h5v21h-5zM754.500 553h5v21h-5zM1008.200 553h5v21h-5zM1019.500 553h5v21h-5zM1042.500 553h5v21h-5zM949.800 723h5v19h-5z"/>
<use href="#u" x="695.700" y="570"/><use href="#u" x="710.300" y="570"/><use href="#u" x="745" y="570"/><use href="#u" x="757" y="570"/><use href="#u" x="1010.700" y="570"/><use href="#u" x="1022" y="570"/><use href="#u" x="1045" y="570"/><use href="#u" x="952.300" y="738.300"/>
<path class="w" d="M691 576L682.300 590V616.700M705 576L699.300 590V616.700M740 576L731.300 590V616.700M752 576L746.300 590V616.700M1021.700 576.700L1031 593.300V618.300M1026.700 576.700L1047.700 593V618.300M1048.300 576.700L1058.300 593V618.300M946 745L939.300 758.300V785"/>
<rect x="739" y="590.700" width="5.300" height="24.500" fill="#fff"/>
<text class="v" transform="translate(679.500 615) rotate(-90)">P1-1 屋顶</text><text class="v" transform="translate(696.500 615) rotate(-90)">P2-1 屋顶</text><text class="v" transform="translate(728.500 615) rotate(-90)">P2-2 屋顶</text><text class="v" transform="translate(1028.500 617) rotate(-90)">P1-7 屋顶</text><text class="v" transform="translate(1045 617) rotate(-90)">P2-8 屋顶</text><text class="v" transform="translate(1056 617) rotate(-90)">P1-8 屋顶</text><text class="v" transform="translate(937 783) rotate(-90)">P2-7 屋顶</text>

<!-- fan units bottom -->
<path class="t" style="stroke-width:3" d="M691.500 890.500h8v9h-8zM968.800 890.500h9.700v9.500h-9.700z"/>
<path class="t" style="stroke-width:2.200" d="M707 890h7v8h-7zM741.300 890h7.700v7h-7.700zM949 890h7v8h-7zM1018 890h8v8h-8z"/>
<path class="t" d="M753 889h8.500v17.500H753zM1040.500 889h9.500v17.500h-9.500z"/>
<path fill="#00008b" stroke="#1a1aff" stroke-width="1.300" d="M693.200 884h5v16h-5zM707.800 884h5v15h-5zM742.500 884h5v14h-5zM754.500 884h5v14h-5zM949.800 884h5v14h-5zM971.200 884h5v15h-5zM1019.200 884h5v14h-5zM1042.800 884h5v14h-5z"/>
<use href="#u" x="695.700" y="880.700"/><use href="#u" x="710.300" y="880.700"/><use href="#u" x="745" y="880.700"/><use href="#u" x="757" y="880.700"/><use href="#u" x="952.300" y="880.700"/><use href="#u" x="973.700" y="880.700"/><use href="#u" x="1021.700" y="880.700"/><use href="#u" x="1045.300" y="880.700"/>
<path class="w" d="M682.300 833.300V860L691 875M699.300 833.300V860L706 875M731.300 833.300V860L740 875M746.300 833.300V860L752 875M939.300 833.300V860L948 875M960.300 833.300V860L969 875M1009.300 833.300V860L1017 875M1033.300 833.300V860L1041 875"/>
<rect x="739" y="836" width="5.300" height="24" fill="#fff"/>
<text class="v" transform="translate(679.500 859) rotate(-90)">P1-3 屋顶</text><text class="v" transform="translate(696.500 859) rotate(-90)">P2-3 屋顶</text><text class="v" transform="translate(728.500 859) rotate(-90)">P2-4 屋顶</text><text class="v" transform="translate(936.500 859) rotate(-90)">P2-5 屋顶</text><text class="v" transform="translate(957.500 859) rotate(-90)">P1-5 屋顶</text><text class="v" transform="translate(1006.500 859) rotate(-90)">P2-6 屋顶</text><text class="v" transform="translate(1030.500 859) rotate(-90)">P1-6 屋顶</text>

<!-- elevations -->
<text x="535.500" y="670.500" style="font-size:9.500px;fill:#fff" textLength="15.500" lengthAdjust="spacingAndGlyphs">12.00</text>
<path class="w" d="M527.300 671H552.700M527.300 671L533 677L539 671"/>
<text x="884" y="794" style="font-size:9.500px;fill:#fff" textLength="22" lengthAdjust="spacingAndGlyphs">11.000</text>
<path class="w" d="M883 796H907M883 796L888 801L893 796"/>
<rect x="584" y="707" width="6" height="10" fill="#fff"/><rect x="586" y="710" width="2" height="4" fill="#555"/>

<!-- equipment right -->
<rect x="1245.700" y="744" width="34.600" height="67.700" class="t" style="stroke-width:2"/>
<path class="t" style="stroke-width:2" d="M1245.700 760H1280.300"/>
<path class="w" d="M1247 794.300H1280M1263 795V811M1247 797H1280M1248 797.500L1262 806M1262 797.500L1248 806M1265 797.500L1279 806M1279 797.500L1265 806M1247 806.500H1280"/>
<path d="M1248 807h13v3h-13zM1265 807h13v3h-13z" fill="#fff"/>
<path class="w" d="M1247 780H1242V783H1245V786H1242V789H1247"/>

<!-- title block -->
<rect x="1189.300" y="1007.700" width="38.700" height="17.300" fill="#fff"/>
<path d="M1193 1013H1203M1206 1012H1225M1205 1015H1224M1193 1019H1224M1193 1021.500H1224" stroke="#222933" stroke-width="1.300"/>

<!-- title -->
<text x="855" y="1068.500" style="font-size:14.500px;fill:#e4e6e8;letter-spacing:.3px">屋面排风平面图</text>
<path d="M846 1074H965" stroke="#fff" stroke-width="2.400"/>
<text x="975.700" y="1071" style="font-size:10px;font-weight:bold;fill:#fff" textLength="19" lengthAdjust="spacingAndGlyphs">1:250</text>

<!-- fan detail -->
<path class="g" d="M482.700 991.700H577.700L563.300 968.300L557.300 966H501.700L496.700 968.300ZM512.300 991.700V1017M546.700 991.700V1017M529.300 985V1025.700M512.300 997L521 992L529.300 997L521 1002ZM529.300 997L538 992L546.700 997L538 1002Z"/>
<rect x="524.300" y="1001" width="10.400" height="13" class="g"/>
<rect x="503.300" y="1016.700" width="52.700" height="6" class="g"/>
<path d="M508.500 1014V1022M551 1014V1022" stroke="#0f0" stroke-width="2.500"/>
<rect x="507.300" y="1022" width="5.400" height="21" fill="url(#hat)" stroke="#fff"/>
<rect x="546.700" y="1022" width="6" height="21" fill="url(#hat)" stroke="#fff"/>
<rect x="482.700" y="1036.500" width="24.600" height="6.800" fill="url(#hat)"/>
<rect x="552.700" y="1036.500" width="28" height="6.800" fill="url(#hat)"/>
<path class="w" d="M482.700 1033V1046M580.700 1033V1046M482.700 1043.300H580.700M482.700 1036.500H507.300M552.700 1036.700H598.300V1016.700H556" style="stroke-width:1.300"/>
<path d="M594 1024h3.500v6H594z" fill="#fff"/><path d="M596.500 1014H600M596.500 1039H600" class="w"/>
<path class="w" style="stroke-width:1.100" d="M507.300 1043V1067M552.700 1043V1067M512.300 1043V1059M546.700 1043V1059M510 1057.300H549M505.500 1065H554"/>
<path d="M522 1054h14v2.500h-14zM522 1061h14v2.500h-14z" fill="#e8eaec"/>
<text x="480" y="1030" style="font-size:6.500px;font-weight:bold;fill:#fff">15.70</text>
<path class="w" style="stroke-width:1.100" d="M478 1032.500H497M489 1032.500L494 1036.500L497 1032.500"/>
<text x="495" y="1078.500" style="font-size:7.500px;fill:#b9bdc2">屋顶风机安装大样图</text>

<!-- compass -->
<circle cx="1611.700" cy="215" r="53.500" fill="none" stroke="#484d57" stroke-width="13"/>
<rect x="1586.700" y="189.300" width="50.600" height="50.700" fill="#b3b5b9" stroke="#7f848b" stroke-width=".8"/>
<rect x="1596" y="199" width="32" height="31.500" fill="#a0a3aa"/>
<path d="M1596 224H1628" stroke="#555a62" stroke-width="1.200"/><path d="M1610 202V224" stroke="#444" stroke-width="2.500"/><path d="M1620 211H1624M1622 223H1626" stroke="#333" stroke-width="2"/>
<text x="1611.700" y="166.500" text-anchor="middle" style="font-size:18px;fill:#adb0b5">北</text><text x="1611.700" y="280.500" text-anchor="middle" style="font-size:18px;fill:#adb0b5">南</text><text x="1555" y="223" text-anchor="middle" style="font-size:18px;fill:#adb0b5">西</text><text x="1667.700" y="223" text-anchor="middle" style="font-size:18px;fill:#adb0b5">东</text>
<rect x="1588" y="302" width="47.700" height="17" rx="3" fill="#8d909a"/>
<text x="1592" y="314.500" style="font-size:11px;fill:#565b65">WCS</text><path d="M1623.500 308.500H1630M1625 311H1628.500" stroke="#a9abb2" stroke-width="1.300"/>

<!-- left panel -->
<rect x="3" y="133" width="30" height="1104" fill="#3a4352"/>
<rect x="7.500" y="134" width="21" height="447" fill="#333b49" stroke="#2b323e"/>
<path d="M8 137H24M8 139H24" stroke="#ccd0d4" stroke-width="1" stroke-dasharray="1 1"/>
<g transform="translate(15.700 0)">
<use href="#t1" y="153"/><use href="#t2" y="175"/><use href="#t3" y="196.700"/><use href="#t4" y="218"/><use href="#t5" y="240.700"/><use href="#t6" y="263"/><use href="#t7" y="285"/><use href="#t8" y="306.700"/><use href="#t9" y="329"/><use href="#t10" y="350"/><use href="#t11" y="372"/><use href="#t12" y="395.700"/><use href="#t13" y="417"/><use href="#t14" y="438"/><use href="#t15" y="461.700"/><use href="#t16" y="483"/><use href="#t17" y="504"/><use href="#t18" y="526.700"/><use href="#t19" y="549"/><use href="#t20" y="570.700"/>
</g>

<!-- right panel -->
<rect x="1695" y="133" width="33" height="1104" fill="#3a4352"/>
<rect x="1699.500" y="134" width="23.500" height="403" fill="#333b49" stroke="#2b323e"/>
<path d="M1703 137H1719M1703 139H1719" stroke="#ccd0d4" stroke-width="1" stroke-dasharray="1 1"/>
<g transform="translate(1711 0)">
<use href="#r1" y="153"/><use href="#r2" y="175"/><use href="#r3" y="198"/><use href="#r4" y="219"/><use href="#r5" y="241.700"/><use href="#r6" y="263"/><use href="#r7" y="285.700"/><use href="#r8" y="306.700"/><use href="#r9" y="329"/><use href="#r10" y="350.700"/><use href="#r11" y="373"/><use href="#r12" y="395"/><use href="#r13" y="416.700"/><use href="#r14" y="439"/><use href="#r15" y="461.700"/><use href="#r16" y="483"/><use href="#r17" y="505"/><use href="#r18" y="526.700"/>
</g>

<!-- command -->
<rect x="3" y="1237" width="1725" height="56" fill="#333b49"/>
<rect x="29" y="1239" width="1697" height="28.700" fill="#c8c8c8"/>
<rect x="29" y="1269" width="1697" height="23.700" fill="#fff"/>
<path d="M8 1244H25M8 1246.500H25" stroke="#e8eaec" stroke-width="1.600" stroke-dasharray="1.600 1"/>
<path d="M11 1254.500L19 1263M19 1254.500L11 1263" stroke="#dfe2e5" stroke-width="2.200"/>
<path d="M9 1290L19 1280M18 1276Q24 1274 23 1280L18 1281Q16 1279 18 1276Z" stroke="#dfe2e5" stroke-width="2" fill="#dfe2e5"/>
<text x="32" y="1260" style="font-size:18px;fill:#111">命令： *取消*</text>
<rect x="33.500" y="1275" width="15" height="11.500" fill="#d8d8d8" stroke="#777"/><path d="M36 1279L39 1281L36 1283M40 1284H45" stroke="#333" fill="none"/>
<path d="M52 1279H58L55 1282.500Z" fill="#777"/>
<text x="67.500" y="1287" style="font-size:17px;font-style:italic;fill:#8c8c8c">键入命令</text>

<!-- status bar -->
<rect x="3" y="1293" width="1725" height="31" fill="#222933"/>
<path d="M15 1294H58L55 1307Q54 1312 48 1312H25Q20 1312 19 1307Z" fill="#3a4352"/>
<path d="M65 1294H113L110 1307Q109 1312 103 1312H74Q69 1312 68 1307Z" fill="#323a47"/>
<path d="M118 1294H167L164 1307Q163 1312 157 1312H127Q122 1312 121 1307Z" fill="#323a47"/>
<path d="M172 1294H197L194 1307Q193 1312 188 1312H180Q175 1312 174 1307Z" fill="#323a47"/>
<text x="27" y="1307.500" style="font-size:12px;font-weight:bold;fill:#f0f0f0">模型</text>
<text x="74" y="1307.500" style="font-size:12px;fill:#a5abb3">布局1</text>
<text x="128" y="1307.500" style="font-size:12px;fill:#a5abb3">布局2</text>
<path d="M181 1303H191M186 1298V1308" stroke="#a5abb3" stroke-width="2"/>

<g fill="#39424f">
<rect x="1124" y="1296.700" width="29.500" height="22.300"/><rect x="1157.500" y="1296.700" width="63.200" height="22.300"/><rect x="1224" y="1296.700" width="104.600" height="22.300"/><rect x="1329.400" y="1296.700" width="63.600" height="22.300"/><rect x="1394.600" y="1296.700" width="23.400" height="22.300"/><rect x="1422" y="1296.700" width="105.400" height="22.300"/><rect x="1530" y="1296.700" width="40" height="22.300"/><rect x="1571" y="1296.700" width="24" height="22.300"/><rect x="1598" y="1296.700" width="23.500" height="22.300"/><rect x="1625" y="1296.700" width="21.500" height="22.300"/><rect x="1648.500" y="1296.700" width="25" height="22.300"/><rect x="1677.500" y="1296.700" width="22.100" height="22.300"/>
</g>
<rect x="1157.500" y="1296.700" width="22.500" height="22.300" fill="#5b8ec0"/>
<rect x="1354.300" y="1296.700" width="22.200" height="22.300" fill="#5b8ec0"/>
<rect x="1422" y="1296.700" width="22.500" height="22.300" fill="#5b8ec0"/>
<text x="1127" y="1312" style="font-size:12px;fill:#d5d8dc">模型</text>
<path d="M1160.500 1303.500H1177M1160.500 1308H1177M1160.500 1312.500H1177M1164.500 1299.500V1316M1169 1299.500V1316M1173.500 1299.500V1316" stroke="#fff" fill="none"/>
<path d="M1186 1301.500h2v2h-2zM1192 1301.500h2v2h-2zM1198 1301.500h2v2h-2zM1186 1307h2v2h-2zM1192 1307h2v2h-2zM1198 1307h2v2h-2zM1186 1312.500h2v2h-2zM1192 1312.500h2v2h-2zM1198 1312.500h2v2h-2z" fill="#d5d8dc"/>
<use href="#dr" x="1212.700" y="1307.700"/><use href="#dr" x="1280" y="1307.700"/><use href="#dr" x="1319.700" y="1307.700"/><use href="#dr" x="1385" y="1307.700"/><use href="#dr" x="1519" y="1307.700"/><use href="#dr" x="1562" y="1307.700"/>
<path d="M1228 1298V1316H1244" fill="none" stroke="#d5d8dc" stroke-width="1.400"/><path d="M1228 1312H1232V1316" fill="none" stroke="#d5d8dc"/>
<circle cx="1260" cy="1308" r="6.500" fill="none" stroke="#c9ccd0" stroke-width="1.300"/><path d="M1253 1311L1265 1300M1258 1308H1268" fill="none" stroke="#c9ccd0" stroke-width="1.300"/>
<path d="M1293 1298L1306 1317" stroke="#c0505e" stroke-width="1.100"/><path d="M1299 1298V1317" stroke="#3ea84a" stroke-width="1.100"/><rect x="1297.500" y="1306" width="3.500" height="3.500" fill="#d5d8dc"/>
<path d="M1333 1315H1350M1333 1315L1346 1301" fill="none" stroke="#d5d8dc" stroke-width="1.300"/><circle cx="1340" cy="1308" r="1.800" fill="#d5d8dc"/>
<rect x="1358" y="1304" width="15" height="12" fill="none" stroke="#fff" stroke-width="1.300"/><rect x="1357.500" y="1299" width="6" height="6" fill="#5b8ec0" stroke="#fff"/>
<path d="M1398 1301.500H1414M1398 1306H1408M1398 1310H1414M1398 1314.500H1408" stroke="#e8eaec" stroke-width="2"/>
<path d="M1431 1299L1435 1317L1431 1313L1427 1317Z" fill="#fff"/><path d="M1427 1303L1431 1309L1435 1303" fill="none" stroke="#fff"/><circle cx="1439" cy="1302" r="2.500" fill="none" stroke="#fff"/>
<path d="M1456 1299L1460 1317L1456 1313L1452 1317Z" fill="#d9dcde"/><path d="M1458 1303l4-3 1 3z" fill="#d9dcde"/>
<path d="M1480 1299L1485 1317L1480 1313L1475 1317Z" fill="#d9dcde"/>
<text x="1498" y="1312" style="font-size:11px;fill:#c9ccd0;letter-spacing:-.5px">1:1</text>
<g transform="translate(1541.400 1307.700)"><circle r="6" fill="#c9ccd0"/><path d="M0-8.500V8.500M-8.500 0H8.500M-6-6L6 6M6-6L-6 6" stroke="#c9ccd0" stroke-width="2.200"/><circle r="2.200" fill="#39424f"/></g>
<path d="M1583 1299V1316.500M1574 1307.700H1592" stroke="#e6e8ea" stroke-width="2"/>
<rect x="1602" y="1300" width="7" height="7" fill="none" stroke="#d5d8dc"/><circle cx="1615" cy="1304" r="2.800" fill="none" stroke="#d5d8dc"/><path d="M1605 1316L1608.500 1310L1612 1316Z" fill="none" stroke="#d5d8dc"/>
<rect x="1628" y="1309" width="7" height="7" fill="#e5b648"/><rect x="1631" y="1299" width="7" height="9" fill="none" stroke="#7fb8e6"/><path d="M1628 1302.500H1642M1631.500 1297V1306" stroke="#7fb8e6"/><path d="M1634 1313L1637 1317L1645 1306" fill="none" stroke="#3eb54e" stroke-width="2.400"/>
<rect x="1652" y="1299" width="15" height="10" fill="#b8bcc0"/><path d="M1653 1307Q1656 1299 1659 1306T1666 1303" fill="none" stroke="#555"/><path d="M1656 1317L1661 1305L1666 1317Z" fill="#e88b72"/>
<rect x="1681" y="1301" width="15" height="13" fill="none" stroke="#c9ccd0"/><path d="M1684 1311L1687.500 1307.500M1689.500 1305.500L1693 1302" stroke="#c9ccd0"/><path d="M1691 1302H1693.500V1304.500M1683 1309V1312H1686" fill="none" stroke="#c9ccd0"/>
<path d="M1704 1300.700H1721M1704 1307.700H1721M1704 1314.700H1721" stroke="#d5d8dc" stroke-width="2"/>
</svg>
</body></html>
